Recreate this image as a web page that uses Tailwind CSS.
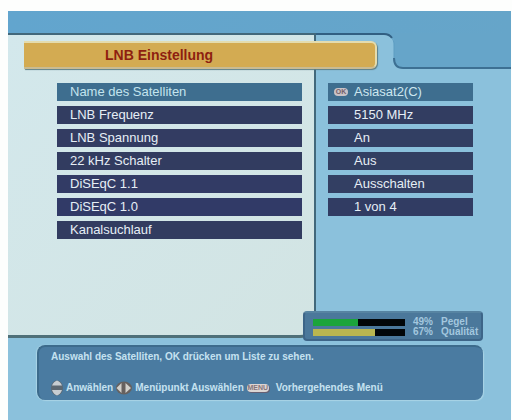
<!DOCTYPE html>
<html lang="de">
<head>
<meta charset="utf-8">
<meta name="viewport" content="width=device-width, initial-scale=1">
<title>LNB Einstellung</title>
<script src="https://cdn.jsdelivr.net/npm/@tailwindcss/browser@4"></script>
</head>
<body class="flex min-h-screen flex-col bg-[#fdfefd] pt-[11px] pr-px pl-2 font-['Liberation_Sans',Arial,sans-serif] text-[13px] leading-4 text-[#e6eef6]">
<div class="flex flex-1 flex-col bg-[#8bc1dc]">
  <div class="h-[22px] bg-linear-to-r from-[#62a5ce] to-[#66a5c9]"></div>

  <main class="grid flex-1 grid-cols-[308fr_195fr] grid-rows-[36px_1fr_3px]">
    <!-- Settings panel -->
    <section class="col-start-1 row-span-2 row-start-1 rounded-br-2xl border-t-2 border-r-2 border-b-3 border-[#42687b] border-b-[#4f7079] bg-linear-to-br from-[#d3e8ec] to-[#d2e4e3] pt-12 pr-3 pl-[49px]">
      <ul class="flex flex-col gap-[5px]">
        <li class="flex"><button class="h-[18px] flex-1 bg-[#3e6e8f] pl-[13px] text-left text-[#c3e4ee]">Name des Satelliten</button></li>
        <li class="flex"><button class="h-[18px] flex-1 bg-[#323d61] pl-[13px] text-left">LNB Frequenz</button></li>
        <li class="flex"><button class="h-[18px] flex-1 bg-[#333c62] pl-[13px] text-left">LNB Spannung</button></li>
        <li class="flex"><button class="h-[18px] flex-1 bg-[#323c60] pl-[13px] text-left">22 kHz Schalter</button></li>
        <li class="flex"><button class="h-[18px] flex-1 bg-[#323b65] pl-[13px] text-left">DiSEqC 1.1</button></li>
        <li class="flex"><button class="h-[18px] flex-1 bg-[#313a67] pl-[13px] text-left">DiSEqC 1.0</button></li>
        <li class="flex"><button class="h-[18px] flex-1 bg-[#323c60] pl-[13px] text-left">Kanalsuchlauf</button></li>
      </ul>
    </section>

    <!-- Title bar and the stepped edge of the header -->
    <header class="col-span-2 col-start-1 row-start-1 flex pl-4">
      <h1 class="mt-2 flex flex-1 items-center rounded-r-md border-t-2 border-r-2 border-b-2 border-[#e4dcae] border-b-[#c9bb92] bg-[#d3ab52] pl-[81px] text-sm font-bold text-[#8e1f10] shadow-[1px_1px_1px_#5e7f86]">LNB Einstellung</h1>
      <svg class="h-9 w-[26px] shrink-0" viewBox="0 0 26 36" aria-hidden="true">
        <path d="M0 0H26V35H25C20 35 17 32 17 27V10C17 4 13 1 7 1H0Z" fill="#66a5c9"/>
        <path d="M0 1H7C11 1 13 2 15 5" fill="none" stroke="#315f82" stroke-width="2"/>
        <path d="M15 5C17 8 17 10 17 13V25" fill="none" stroke="#5d9dc2" stroke-width="1"/>
        <path d="M17 25C17 32 20 35 26 35" fill="none" stroke="#3d7093" stroke-width="2"/>
      </svg>
      <div class="w-[108px] shrink-0 border-b-2 border-[#3d7093] bg-[#66a5c9]"></div>
    </header>
    <div class="col-start-2 row-start-1 mr-[134px] h-0.5 bg-[#315f82]"></div>

    <!-- Current values -->
    <section class="col-start-2 row-start-2 pt-[14px] pr-[38px] pl-3">
      <ul class="flex flex-col gap-[5px]">
        <li class="flex h-[18px] items-center bg-[#3e6e8f] text-[#cde7f0]"><span class="mx-1.5 w-3.5 rounded bg-[#c9c3c7] text-center text-[7px] leading-2 font-bold text-[#76616b]">OK</span>Asiasat2(C)</li>
        <li class="h-[18px] bg-[#323d61] pl-[26px] leading-[18px]">5150 MHz</li>
        <li class="h-[18px] bg-[#323f63] pl-[26px] leading-[18px]">An</li>
        <li class="h-[18px] bg-[#323f62] pl-[26px] leading-[18px]">Aus</li>
        <li class="h-[18px] bg-[#333f63] pl-[26px] leading-[18px]">Ausschalten</li>
        <li class="h-[18px] bg-[#313c63] pl-[26px] leading-[18px]">1 von 4</li>
      </ul>
    </section>

    <!-- Signal meters -->
    <section class="z-10 col-span-2 col-start-1 row-span-2 row-start-2 mr-7 grid w-[180px] grid-cols-[92px_20px_1fr] items-center gap-x-2 self-end justify-self-end rounded border-2 border-[#3d6588] border-t-[#5784a2] bg-[#4b789b] pt-1 pb-0.5 pl-2 text-[10px] leading-[10px] font-bold text-[#a3c7df]">
      <div class="h-[7px] bg-[#020608]"><div class="h-full bg-[#1ba43b]" style="width:49%"></div></div>
      <span>49%</span><span>Pegel</span>
      <div class="h-[7px] bg-[#020608]"><div class="h-full bg-[#b9b650]" style="width:67%"></div></div>
      <span>67%</span><span>Qualität</span>
    </section>
  </main>

  <!-- Help text -->
  <footer class="mt-1 mr-7 mb-5 ml-[29px] flex h-[55px] flex-col justify-between rounded-lg border-t-2 border-l-2 border-[#3c6b8c] bg-[#4a7ba1] pt-1 pb-1 pl-3 text-[10px] leading-3 font-bold text-[#c5e2f0] shadow-[-1px_0_1px_#a9d4e6,1px_1px_1px_#a9d4e6]">
    <p>Auswahl des Satelliten, OK drücken um Liste zu sehen.</p>
    <div class="flex items-center gap-[3px]">
      <svg class="h-4 w-3" viewBox="0 0 12 16" aria-hidden="true">
        <ellipse cx="6" cy="8" rx="6" ry="7.500" fill="#5c6872"/>
        <path d="M6 .5C8 1 10 3 11 5.500H1C2 3 4 1 6 .5ZM1 10H11C10 13 8 15 6 15.500C4 15 2 13 1 10Z" fill="#c7cdd2"/>
      </svg>
      <span>Anwählen</span>
      <svg class="h-3.5 w-4" viewBox="0 0 16 14" aria-hidden="true">
        <ellipse cx="8" cy="7" rx="8" ry="6.500" fill="#66615f"/>
        <path d="M5.500 2V12L.5 7ZM9.500 2V12L15 7Z" fill="#d2d0cb"/>
      </svg>
      <span>Menüpunkt Auswählen</span>
      <span class="w-[22px] rounded-sm bg-[#dcd5d3] text-center text-[7px] leading-2 text-[#85747a] shadow-[1px_1px_0_#655f73]">MENU</span>
      <span class="pl-1">Vorhergehendes Menü</span>
    </div>
  </footer>
</div>
</body>
</html>
